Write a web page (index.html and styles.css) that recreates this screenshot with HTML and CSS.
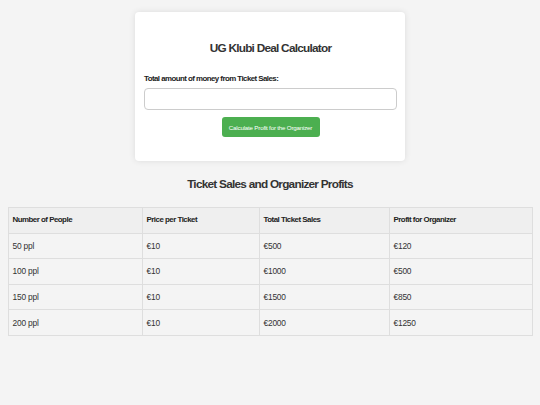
FILE: index.html
```html
<!DOCTYPE html>
<html lang="en">
<head>
<meta charset="utf-8">
<title>UG Klubi Deal Calculator</title>
<link rel="stylesheet" href="styles.css">
</head>
<body>
<main class="page">
  <section class="card">
    <h1 class="card-title">UG Klubi Deal Calculator</h1>
    <label class="field-label" for="sales">Total amount of money from Ticket Sales:</label>
    <input class="field-input" id="sales" type="text">
    <div class="actions">
      <button class="btn" type="button">Calculate Profit for the Organizer</button>
    </div>
  </section>

  <h2 class="section-title">Ticket Sales and Organizer Profits</h2>

  <table class="profits">
    <colgroup>
      <col class="c1"><col class="c2"><col class="c3"><col class="c4">
    </colgroup>
    <thead>
      <tr><th>Number of People</th><th>Price per Ticket</th><th>Total Ticket Sales</th><th>Profit for Organizer</th></tr>
    </thead>
    <tbody>
      <tr><td>50 ppl</td><td>€10</td><td>€500</td><td>€120</td></tr>
      <tr><td>100 ppl</td><td>€10</td><td>€1000</td><td>€500</td></tr>
      <tr><td>150 ppl</td><td>€10</td><td>€1500</td><td>€850</td></tr>
      <tr><td>200 ppl</td><td>€10</td><td>€2000</td><td>€1250</td></tr>
    </tbody>
  </table>
</main>
</body>
</html>
```

FILE: styles.css
```css
html, body {
  margin: 0;
  padding: 0;
}

body {
  background: #f4f4f4;
  font-family: "Liberation Sans", Arial, sans-serif;
  color: #333;
}

.page {
  padding: 12px 8px 0;
  display: flex;
  flex-direction: column;
  align-items: center;
}

.card {
  box-sizing: border-box;
  width: 270px;
  background: #fff;
  border-radius: 4px;
  box-shadow: 0 0 6px rgba(0, 0, 0, 0.1);
  padding: 29px 8px 24px 9px;
  display: flex;
  flex-direction: column;
}

.card-title {
  margin: 0;
  font-size: 11.8px;
  line-height: 15px;
  letter-spacing: -0.75px;
  font-weight: bold;
  text-align: center;
  color: #333;
}

.field-label {
  margin-top: 18px;
  font-size: 7.9px;
  line-height: 10px;
  letter-spacing: -0.55px;
  font-weight: bold;
  color: #222;
}

.field-input {
  box-sizing: border-box;
  margin: 4px 0 0;
  width: 100%;
  height: 22px;
  border: 1px solid #ccc;
  border-radius: 4px;
  background: #fff;
  padding: 0 6px;
}

.actions {
  margin-top: 7px;
  display: flex;
  justify-content: center;
}

.btn {
  box-sizing: border-box;
  width: 98px;
  height: 20px;
  padding: 0;
  border: none;
  border-radius: 3px;
  background: #4caf50;
  color: #fff;
  font-family: inherit;
  font-size: 6.2px;
  letter-spacing: -0.2px;
}

.section-title {
  margin: 16px 0 0;
  font-size: 11.8px;
  line-height: 15px;
  letter-spacing: -0.75px;
  font-weight: bold;
  color: #333;
}

.profits {
  margin-top: 15px;
  width: 524px;
  border-collapse: collapse;
  table-layout: fixed;
  font-size: 8.4px;
  color: #333;
}

.c1 { width: 134px; }
.c2 { width: 117px; }
.c3 { width: 130px; }
.c4 { width: 143px; }

.profits th,
.profits td {
  border: 1px solid #dedede;
  padding: 0 4px;
  height: 24.6px;
  line-height: 10px;
  text-align: left;
  vertical-align: middle;
}

.profits td {
  letter-spacing: -0.2px;
}

.profits th {
  background: #efefef;
  font-size: 7.9px;
  letter-spacing: -0.5px;
  font-weight: bold;
  color: #222;
}
```
